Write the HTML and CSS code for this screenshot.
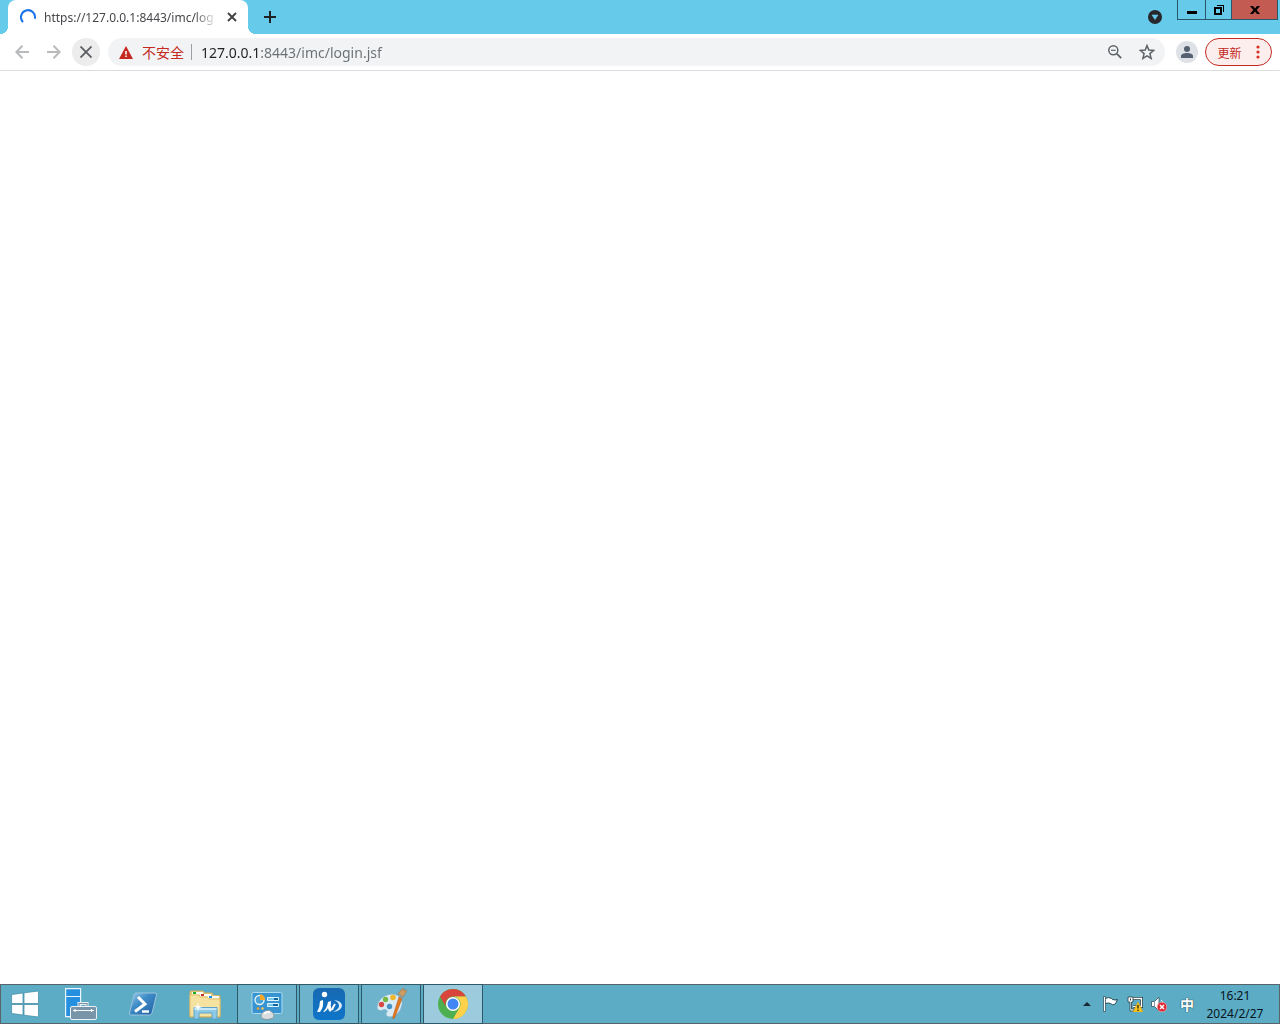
FILE: index.html
```
<!DOCTYPE html>
<html lang="zh-CN">
<head>
    <meta charset="UTF-8">
    <meta name="viewport" content="width=device-width, initial-scale=1.0">
    <title>https://127.0.0.1:8443/imc/login.jsf</title>
    <link rel="stylesheet" href="styles.css">
</head>
<body>
    <!-- TAB STRIP -->
    <header class="tab-strip">
        <div class="tab">
            <svg class="spinner" width="16" height="16" viewBox="0 0 16 16"><path d="M3 13.1A7 7 0 1 1 14.8 9.7" fill="none" stroke="#1a73e8" stroke-width="2"/></svg>
            <span class="tab-title">https://127.0.0.1:8443/imc/log</span>
            <button class="tab-close" aria-label="关闭">
                <svg width="10" height="10" viewBox="0 0 10 10"><path d="M1 1l8 8M9 1l-8 8" stroke="#3c4043" stroke-width="1.8"/></svg>
            </button>
        </div>
        <button class="new-tab" aria-label="新标签页">
            <svg width="12" height="12" viewBox="0 0 12 12"><path d="M6 0v12M0 6h12" stroke="#202124" stroke-width="2"/></svg>
        </button>
        <button class="tab-search" aria-label="搜索标签页">
            <svg width="14" height="14" viewBox="0 0 14 14"><circle cx="7" cy="7" r="7" fill="#27282c"/><path d="M4 5h6L7 9.5z" fill="#68caea" stroke="#68caea" stroke-width=".6"/></svg>
        </button>
        <div class="window-buttons">
            <button class="win-btn" aria-label="最小化">
                <svg width="10" height="10" viewBox="0 0 10 10"><path d="M0 6h10v3H0z"/></svg>
            </button>
            <button class="win-btn win-restore" aria-label="还原">
                <svg width="10" height="10" viewBox="0 0 10 10"><path d="M3 0h7v7H9V1H3z"/><path d="M0 2h8v8H0zM2 4v4h4V4z" fill-rule="evenodd"/></svg>
            </button>
            <button class="win-btn win-close" aria-label="关闭窗口">
                <svg width="10" height="8" viewBox="0 0 10 8"><path d="M0 0h3l2 2.4L7 0h3L6.7 4 10 8H7L5 5.6 3 8H0l3.3-4z"/></svg>
            </button>
        </div>
    </header>

    <!-- TOOLBAR -->
    <nav class="toolbar">
        <button class="tool-btn" aria-label="后退">
            <svg width="14" height="14" viewBox="0 0 14 14"><path d="M14 7H1.5M7.5 .8L1.3 7l6.2 6.2" fill="none" stroke="#b9babc" stroke-width="2"/></svg>
        </button>
        <button class="tool-btn" aria-label="前进">
            <svg width="14" height="14" viewBox="0 0 14 14"><path d="M0 7h12.5M6.5 .8L12.7 7l-6.2 6.2" fill="none" stroke="#b9babc" stroke-width="2"/></svg>
        </button>
        <button class="tool-btn loading" aria-label="停止">
            <svg width="12" height="12" viewBox="0 0 12 12"><path d="M.5 .5l11 11M11.5 .5l-11 11" stroke="#5a5d61" stroke-width="1.8"/></svg>
        </button>
        <div class="omnibox">
            <button class="security">
                <svg width="14" height="13" viewBox="0 0 14 13"><path d="M7 0l7 13H0z" fill="#c5291f"/><path d="M6.2 5h1.6v3.4H6.2zM6.2 9.4h1.6V11H6.2z" fill="#fff"/></svg>
                <span>不安全</span>
            </button>
            <input class="url" type="text" aria-label="地址" value="127.0.0.1:8443/imc/login.jsf">
            <button class="omni-btn" aria-label="缩放">
                <svg width="14" height="14" viewBox="0 0 14 14" fill="none" stroke="#5f6368"><circle cx="5.3" cy="5.3" r="4.5" stroke-width="1.5"/><path d="M8.7 8.7l4.5 4.5" stroke-width="1.8"/><path d="M3 5.3h4.6" stroke-width="1.2"/></svg>
            </button>
            <button class="omni-btn" aria-label="为此标签页添加书签">
                <svg width="16" height="16" viewBox="0 0 16 16"><path d="M8 1.6l1.8 4.5 4.8.4-3.7 3.1 1.2 4.7L8 11.8l-4.1 2.5 1.2-4.7-3.7-3.1 4.8-.4z" fill="none" stroke="#5f6368" stroke-width="1.5"/></svg>
            </button>
        </div>
        <button class="profile" aria-label="个人资料">
            <svg width="12" height="12" viewBox="0 0 12 12"><circle cx="6" cy="3" r="3" fill="#556070"/><path d="M0 12v-2c0-2 3-3 6-3s6 1 6 3v2z" fill="#556070"/></svg>
        </button>
        <button class="update">
            <span>更新</span>
            <svg width="4" height="14" viewBox="0 0 4 14" fill="#d93025"><circle cx="2" cy="2" r="1.6"/><circle cx="2" cy="7" r="1.6"/><circle cx="2" cy="12" r="1.6"/></svg>
        </button>
    </nav>

    <main class="page"></main>

    <!-- TASKBAR -->
    <footer class="taskbar">
        <button class="start" aria-label="开始">
            <svg width="28" height="28" viewBox="0 0 28 28"><path d="M.6 4.5L12 3v10.5H.6zM13 2.8L27.5 1v12.5H13zM.6 14.5H12V25L.6 23.5zM13 14.5h14.5V27L13 25.2z" fill="#fff" stroke="#458fa8" stroke-width=".8"/></svg>
        </button>
        <div class="apps">
            <button class="app" aria-label="服务器管理器">
                <svg width="32" height="32" viewBox="0 0 32 32"><path d="M.6 .6h15v28H.6z" fill="#2490df" stroke="#eaf6fb" stroke-width="1.2"/><path d="M1 8.5h14" stroke="#eaf6fb"/><path d="M14 18v-2.500h8V18" fill="none" stroke="#e9edf0" stroke-width="3"/><path d="M14 18v-2.500h8V18" fill="none" stroke="#7893a6" stroke-width="1.2"/><rect x="5.5" y="18.5" width="26" height="13" rx="1.5" fill="#7794a9" stroke="#edf2f5"/><path d="M8 22.500h21M10 21v3M26.500 21v3" stroke="#f4f8fa" stroke-width="1.2"/></svg>
            </button>
            <button class="app" aria-label="Windows PowerShell">
                <svg width="32" height="32" viewBox="0 0 32 32"><defs><linearGradient id="ps" x2="1" y2="1"><stop stop-color="#a5d0eb"/><stop offset=".4" stop-color="#3e8cc8"/><stop offset="1" stop-color="#205f9f"/></linearGradient></defs><path d="M9 5h19q2 0 1.500 2L25 25q-.5 2-2.500 2H4q-2 0-1.500-2L7 7q.5-2 2-2z" fill="url(#ps)" stroke="#9cc4dd"/><path d="M11 9l7 7L8 23.500" fill="none" stroke="#fff" stroke-width="3"/><path d="M15 23.500h7" stroke="#fff" stroke-width="2.4"/></svg>
            </button>
            <button class="app" aria-label="文件资源管理器">
                <svg width="32" height="32" viewBox="0 0 32 32"><path d="M1 29V4q0-1 1-1h12l1.500 2H23l1.500 2.500H30q1 0 1 1V29z" fill="#e9cf80" stroke="#cfae5c"/><path d="M3 4h11v2.500H3zM11 6h11v2.500H11zM19 8h11v2.500H19z" fill="#fff"/><path d="M4 4h3v2H4z" fill="#16b01e"/><path d="M12 6h3v2h-3z" fill="#c8312b"/><path d="M20 8h3v2h-3z" fill="#1d8fe8"/><path d="M1 7h9l1 2h7l2 2h11v16q0 1.500-1.500 1.500h-27Q1 28.500 1 27z" fill="#f5e2a0" stroke="#dfc06c"/><path d="M5 19.500h23V31h-5v-6H10v6H5z" fill="#8ecae5" stroke="#5da4ca"/><path d="M5.500 21h22" stroke="#c8eaf8" stroke-width="2"/><path d="M9 14l.7 4 4 1-4 1-.7 4-.7-4-4-1 4-1z" fill="#fff"/></svg>
            </button>
            <button class="app open" aria-label="控制面板">
                <svg width="32" height="32" viewBox="0 0 32 32"><rect x="1" y="4.500" width="30" height="21" rx="1.500" fill="#3794d0" stroke="#a9dcf2"/><circle cx="8.500" cy="12" r="4.500" fill="#4da3d5" stroke="#e1f3fa" stroke-width="1.4"/><path d="M9 12V6a6 6 0 0 1 5 6z" fill="#f7a82b"/><path d="M16.500 9.500h11v3h-11zM16.500 15.500h11v3h-11z" fill="#75c7ed" stroke="#dcf4ff"/><path d="M23 10h4v2h-4zM22 16h5v2h-5z" fill="#12649c"/><circle cx="7" cy="20.500" r="1.300" fill="#f59e29"/><circle cx="11.500" cy="20.500" r="1.300" fill="#f8c557"/><path d="M10 28q0-4 6-5.500 6 0 7 5 0 3.500-6.500 4-6 0-6.500-3.500z" fill="#d9dddf" stroke="#83959e"/><path d="M13 26q2-3 6-2" stroke="#fff" stroke-width="2" fill="none"/></svg>
            </button>
            <button class="app open" aria-label="iMC">
                <svg width="32" height="32" viewBox="0 0 32 32"><defs><linearGradient id="imc" x2="0" y2="1"><stop stop-color="#1769b1"/><stop offset="1" stop-color="#0e75c9"/></linearGradient></defs><rect width="32" height="32" rx="6" fill="url(#imc)"/><circle cx="11.500" cy="6.500" r="2.700" fill="#fff"/><path d="M4 24q3-5 3-11l3-1q1 7-3 12zM10 24q4-4 5-10l3-1q-1 5 1 9l-2 2q-2-2-2-4-2 4-5 4z" fill="#fff"/><path d="M19 22q1-3 3-6" fill="none" stroke="#fff" stroke-width="2"/><path d="M21 12q8 1 8 6-1 5-9 6 6-3 6-6 0-4-5-6z" fill="#d9edf9"/></svg>
            </button>
            <button class="app open" aria-label="画图">
                <svg width="32" height="32" viewBox="0 0 32 32"><path d="M2 19C3 10 11 6 18 6c7 1 10 6 9 11s-5 12-12 12c-4 0-5-3-3-5 1-2-2-3-4-2s-6 1-6-3z" fill="#d9ebf4" stroke="#85b7d0"/><circle cx="6.500" cy="16.500" r="2.700" fill="#d84a45"/><circle cx="10.500" cy="11.500" r="2.700" fill="#77b744"/><circle cx="18" cy="9.500" r="2.800" fill="#efb72a"/><circle cx="14.500" cy="18.500" r="2.700" fill="#4794c6"/><path d="M24 9l3 1.500L20 29l-2 2v-3z" fill="#e57a20" stroke="#b85a18" stroke-width=".6"/><path d="M23 6l5 3 4-6-1-1-2 1V0l-3 2z" fill="#c99c68" stroke="#a17345" stroke-width=".6"/></svg>
            </button>
            <button class="app open active" aria-label="Google Chrome">
                <svg width="32" height="32" viewBox="0 0 32 32"><circle cx="16" cy="16" r="15" fill="#4caf50"/><path d="M3 8.500A15 15 0 0 1 29 8.500H16a7.500 7.500 0 0 0-6.500 11.300z" fill="#d9453a"/><path d="M29 8.500A15 15 0 0 1 16 31l6.500-11.300A7.500 7.500 0 0 0 16 8.500z" fill="#fdd24a"/><circle cx="16" cy="16" r="7" fill="#fff"/><circle cx="16" cy="16" r="5.500" fill="#4285f4"/></svg>
            </button>
        </div>
        <div class="tray">
            <button class="tray-btn" aria-label="显示隐藏的图标">
                <svg width="8" height="4" viewBox="0 0 8 4"><path d="M4 0l4 4H0z" fill="#172a31"/></svg>
            </button>
            <button class="tray-btn" aria-label="操作中心">
                <svg width="16" height="16" viewBox="0 0 16 16"><path d="M2.500 2.500q3-2 6 0l1 1q3 1 5 0-1 3-3 5-2 1-4-1-2-1-5 0" fill="#fff" stroke="#264550"/><path d="M.5 .5h2v15h-2z" fill="#fff" stroke="#264550" stroke-width=".7"/></svg>
            </button>
            <button class="tray-btn" aria-label="网络">
                <svg width="16" height="16" viewBox="0 0 16 16"><path d="M6 2.500h8.500v8H6" fill="none" stroke="#253b43" stroke-width="3"/><path d="M6 2.500h8.500v8H6" fill="none" stroke="#fff" stroke-width="1.400"/><path d="M1 1h5v5H4.500v7H7v2H3V6H1z" fill="#fff" stroke="#263d45" stroke-width=".8"/><path d="M3.500 2.500v2" stroke="#263d45"/><path d="M11 6l5 10H6z" fill="#fbc51c" stroke="#d99900" stroke-width=".5"/><path d="M11 9v3.500M11 13.500V15" stroke="#27251b" stroke-width="1.300"/></svg>
            </button>
            <button class="tray-btn" aria-label="音量">
                <svg width="16" height="16" viewBox="0 0 16 16"><path d="M.5 5.500h3L8 1v14l-4.500-4.500h-3z" fill="#fff" stroke="#35525d" stroke-width=".8"/><path d="M3.500 6v4" stroke="#889da5"/><path d="M10 4q2 1 2 4" fill="none" stroke="#e8f5fa"/><circle cx="11" cy="11" r="4.800" fill="#dd2933" stroke="#f9b7ba" stroke-width=".6"/><path d="M9 9l4 4M13 9l-4 4" stroke="#fff" stroke-width="1.500"/></svg>
            </button>
            <button class="ime">中</button>
            <button class="clock"><time>16:21</time><time>2024/2/27</time></button>
        </div>
    </footer>
</body>
</html>
```

FILE: styles.css
```
* {
    box-sizing: border-box;
}

body {
    min-height: 100vh;
    margin: 0;
    display: flex;
    flex-direction: column;
    background-color: white;
    font-family: "Noto Sans", "Noto Sans CJK SC", sans-serif;
    font-size: 12px;
}

button {
    display: flex;
    justify-content: center;
    align-items: center;
    flex-shrink: 0;
    margin: 0;
    padding: 0;
    border: none;
    background: none;
    font: inherit;
    color: inherit;
}

svg {
    display: block;
    flex-shrink: 0;
}

/* tab strip */
.tab-strip {
    display: flex;
    height: 34px;
    padding-left: 8px;
    background-color: #66caea;
}

.tab {
    position: relative;
    display: flex;
    align-items: center;
    width: 240px;
    padding: 0 8px 0 12px;
    background-color: white;
    border-radius: 8px 8px 0 0;
}

.tab::before,
.tab::after {
    content: "";
    position: absolute;
    bottom: 0;
    width: 8px;
    height: 8px;
}

.tab::before {
    right: 100%;
    background: radial-gradient(circle at top left, transparent 8px, white 8px);
}

.tab::after {
    left: 100%;
    background: radial-gradient(circle at top right, transparent 8px, white 8px);
}

.tab-title {
    flex: 1;
    min-width: 0;
    margin-left: 8px;
    white-space: nowrap;
    color: #45474a;
    mask-image: linear-gradient(to left, transparent, black 24px);
}

.tab-close {
    width: 16px;
    height: 16px;
    margin-left: 6px;
}

.new-tab {
    width: 28px;
    margin-left: 8px;
}

.tab-search {
    width: 28px;
    margin-left: auto;
}

.window-buttons {
    display: flex;
    height: 20px;
    margin: 0 2px 0 8px;
    border: 1px solid #285668;
    border-top: none;
}

.win-btn {
    width: 27px;
}

.win-restore {
    border-left: 1px solid #285668;
    border-right: 1px solid #285668;
}

.win-close {
    width: 45px;
    background-color: #c35b52;
}

/* toolbar */
.toolbar {
    display: flex;
    align-items: center;
    height: 37px;
    padding: 0 8px;
    border-bottom: 1px solid #dadce0;
}

.tool-btn {
    width: 28px;
    height: 28px;
    margin-right: 4px;
    border-radius: 50%;
}

.loading {
    background-color: #ececec;
}

.omnibox {
    display: flex;
    flex: 1;
    align-items: center;
    min-width: 0;
    height: 28px;
    margin-left: 4px;
    padding: 0 8px 0 11px;
    border-radius: 14px;
    background-color: #f1f3f4;
    font-size: 14px;
}

.security {
    gap: 9px;
    height: 16px;
    padding-right: 7px;
    border-right: 1px solid #9aa0a6;
    color: #c5291f;
    line-height: 16px;
}

.security,
.update {
    font-family: "Noto Sans CJK SC", sans-serif;
}

/* the host is drawn darker than the rest of the address */
.url {
    flex: 1;
    min-width: 0;
    height: 20px;
    margin-left: 9px;
    padding: 0;
    border: none;
    outline: none;
    background: linear-gradient(to right, #202124 59px, #6b6f73 59px);
    background-clip: text;
    color: transparent;
    font: inherit;
}

.omni-btn {
    width: 20px;
    height: 20px;
    margin-left: 12px;
}

.profile {
    width: 22px;
    height: 22px;
    margin: 0 7px 0 11px;
    border-radius: 50%;
    background-color: #dee1e6;
}

.update {
    gap: 14px;
    width: 67px;
    height: 28px;
    border: 1px solid #c5291f;
    border-radius: 14px;
    background-color: #fceeed;
    color: #c5291f;
}

.page {
    flex: 1;
}

/* taskbar */
.taskbar {
    display: flex;
    height: 40px;
    border: 1px solid #59636a;
    background-color: #5cacc6;
}

.start {
    width: 48px;
}

.apps {
    display: flex;
    gap: 2px;
    margin: -1px 0 -1px 2px;
}

.app {
    width: 60px;
}

.open {
    border: 1px solid #2d5968;
    background-color: #6db3cb;
}

.active {
    background-color: #9bcbdc;
}

.tray {
    display: flex;
    align-items: center;
    margin-left: auto;
    padding-right: 12px;
}

.tray-btn {
    width: 24px;
    height: 38px;
}

.ime {
    width: 32px;
    height: 38px;
    font-size: 14px;
    font-weight: bold;
    color: white;
    text-shadow: 0 0 1px #163641, 0 0 1px #163641;
}

.clock {
    flex-direction: column;
    width: 64px;
    padding-top: 2px;
    line-height: 18px;
    color: #06151b;
}
```
